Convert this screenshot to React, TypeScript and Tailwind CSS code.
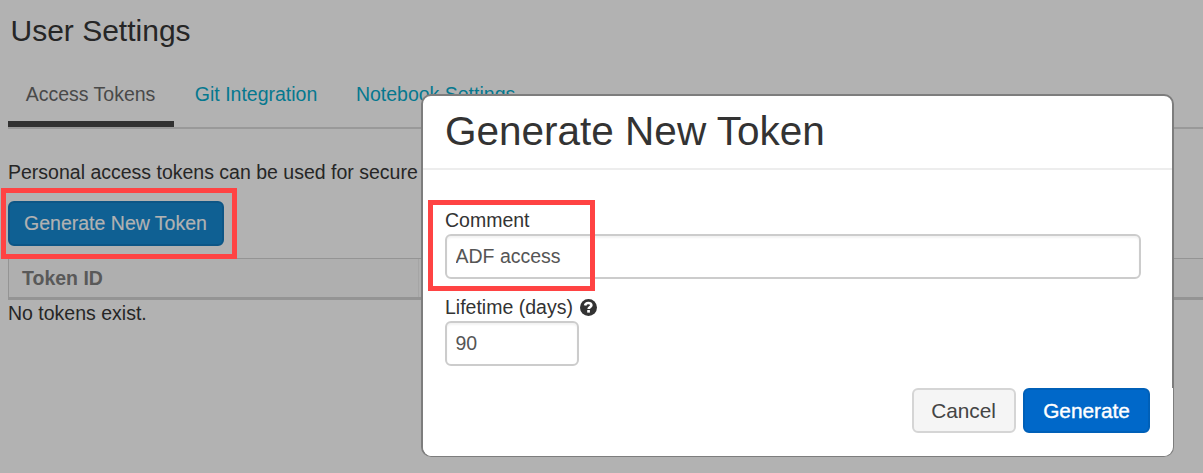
import type { ReactNode } from "react";

const tabs = [
  { label: "Access Tokens", active: true },
  { label: "Git Integration", active: false },
  { label: "Notebook Settings", active: false },
];

function Tab({ label, active }: { label: string; active: boolean }) {
  return (
    <a
      className={
        active
          ? "mr-1 flex h-[48px] w-[166px] shrink-0 items-start justify-center border-b-6 border-[#313131] pr-px text-[#494949]"
          : "mr-[5px] flex h-[48px] shrink-0 items-start px-[16.8px] text-[#05788f]"
      }
    >
      {label}
    </a>
  );
}

function Highlight({ className }: { className: string }) {
  return <div className={`pointer-events-none absolute z-20 border-5 border-[#ff4343] ${className}`} />;
}

function Field({ label, children }: { label: ReactNode; children: ReactNode }) {
  return (
    <label className="block">
      <span className="flex h-[28px] items-center pt-px text-[19.5px] text-[#333]">{label}</span>
      {children}
    </label>
  );
}

function HelpIcon() {
  return (
    <svg viewBox="0 0 17 17" className="ml-[7px] h-[17px] w-[17px]">
      <circle cx="8.5" cy="8.5" r="8.5" fill="#333" />
      <path d="M5.1 6.5C5.4 4.7 6.7 4 8.4 4c1.8 0 3 .8 3 2.2 0 1.9-2.8 1.8-2.8 3.7" fill="none" stroke="#fff" strokeWidth="2.6" />
      <rect x="7.2" y="11" width="2.7" height="2.6" fill="#fff" />
    </svg>
  );
}

function Page() {
  return (
    <main className="h-full w-full overflow-hidden bg-[#b2b2b2] pl-2 text-[19.5px] whitespace-nowrap text-[#262626]">
      <h1 className="ml-[2.5px] h-[79px] pt-[9px] text-[30px] leading-[43px]">User Settings</h1>
      <nav className="flex h-[50px] items-end border-b-2 border-[#999] leading-[30px]">
        {tabs.map((tab) => (
          <Tab key={tab.label} {...tab} />
        ))}
      </nav>
      <p className="mt-7 h-[30px] leading-[30px]">Personal access tokens can be used for secure</p>
      <button className="mt-3.5 flex h-[45px] w-[216px] items-center justify-center rounded-[6px] border-2 border-[#0d5686] bg-[#0f6093] pt-px pr-px text-[19.5px] text-[#b2b2b2] [-webkit-text-stroke:0.2px_#b2b2b2]">
        Generate New Token
      </button>
      <div className="mt-3 flex h-[42px] border-t border-b-3 border-l border-[#949494] bg-[#afafaf] text-[19.5px] leading-[38px] font-bold text-[#595959]">
        <span className="w-[410px] border-r border-[#a5a5a5] pl-[13px]">Token ID</span>
      </div>
      <p className="leading-[27px]">No tokens exist.</p>
    </main>
  );
}

function Dialog() {
  return (
    <section className="absolute top-[94px] left-[421px] flex h-[363px] w-[753px] flex-col rounded-[10px] border-2 border-b border-[#7d7d7d] bg-white">
      <header className="h-[74px] border-b-2 border-[#ededed] pl-[22px] text-[40.5px] leading-[71px] text-[#333]">
        Generate New Token
      </header>
      <div className="flex-1 px-[22px] pt-9">
        <Field label="Comment">
          <input
            className="block h-[45px] w-[696px] rounded-[6px] border-2 border-[#ccc] px-[8.5px] text-[19.5px] text-[#555] shadow-[inset_0_2px_2px_rgba(0,0,0,0.05)] outline-none"
            defaultValue="ADF access"
          />
        </Field>
        <div className="mt-3.5">
          <Field
            label={
              <>
                Lifetime (days)
                <HelpIcon />
              </>
            }
          >
            <input
              className="block h-[45px] w-[134px] rounded-[6px] border-2 border-[#ccc] px-[8.5px] text-[19.5px] text-[#555] shadow-[inset_0_2px_2px_rgba(0,0,0,0.05)] outline-none"
              defaultValue="90"
            />
          </Field>
        </div>
      </div>
      <footer className="-mr-px flex h-[68px] justify-end gap-[7px] rounded-b-[9px] bg-white pr-[23px] text-[20.8px]">
        <button className="h-[45px] w-[104px] rounded-[6px] border-2 border-[#d5d5d5] bg-[#f5f5f5] pr-px text-[#444]">Cancel</button>
        <button className="h-[45px] w-[127px] rounded-[6px] border-2 border-[#0060b8] bg-[#0068c9] text-white [-webkit-text-stroke:0.4px_white]">
          Generate
        </button>
      </footer>
    </section>
  );
}

export default function App() {
  return (
    <div className="relative h-[473px] w-[1203px] overflow-hidden font-['Liberation_Sans',Arial,sans-serif]">
      <Page />
      <Dialog />
      <Highlight className="top-[188px] left-[1px] h-[71px] w-[236px]" />
      <Highlight className="top-[200px] left-[428px] h-[91px] w-[167px]" />
    </div>
  );
}
